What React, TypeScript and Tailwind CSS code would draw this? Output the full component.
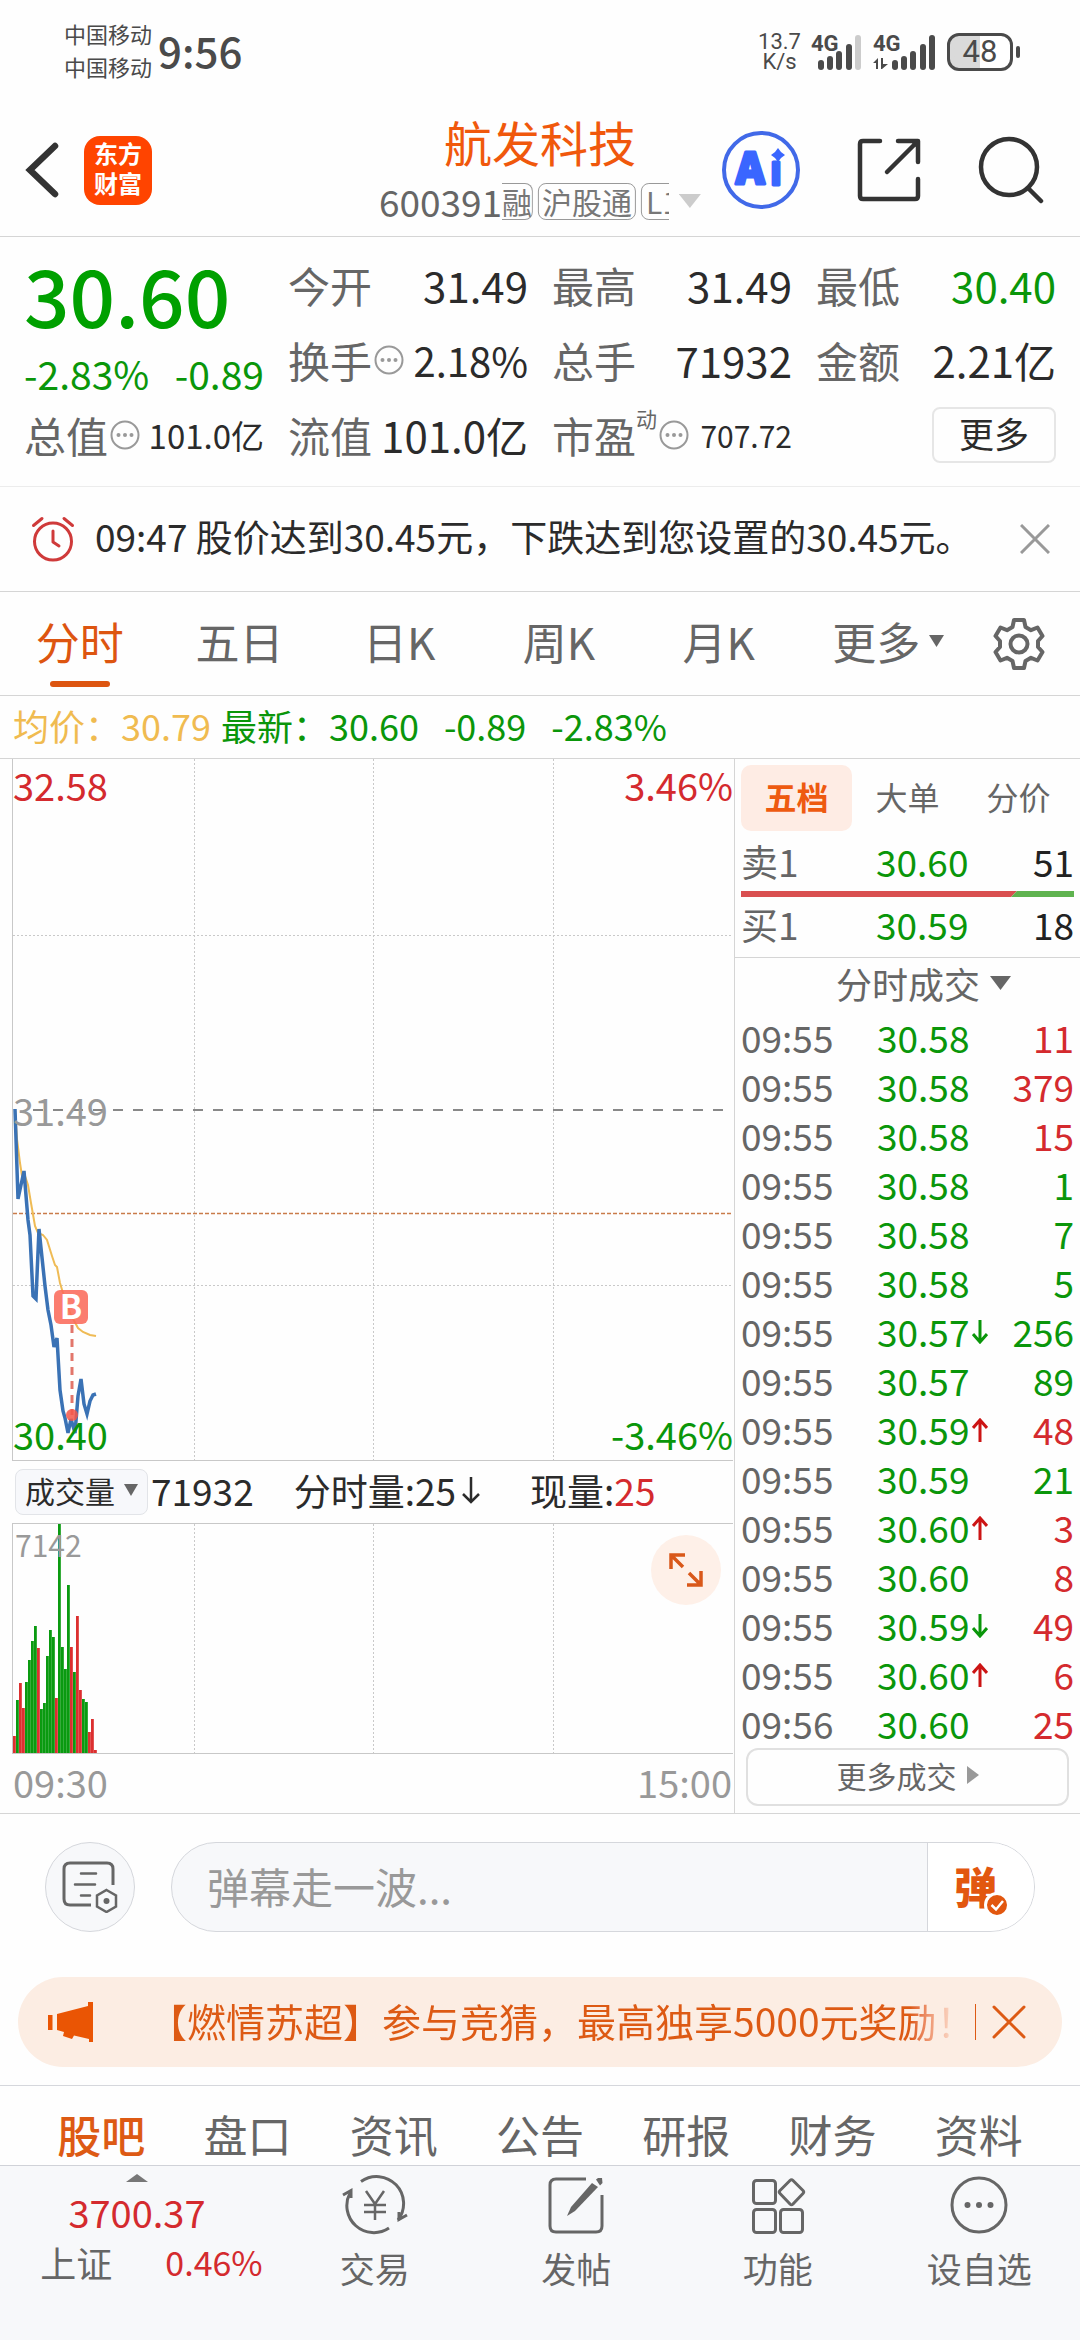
import React from "react";

const UP = "text-[#d42a2e]";
const DOWN = "text-[#0a960a]";

type Trade = { time: string; price: string; dir?: "up" | "down"; vol: string; side: "buy" | "sell" };

const trades: Trade[] = [
  { time: "09:55", price: "30.58", vol: "11", side: "buy" },
  { time: "09:55", price: "30.58", vol: "379", side: "buy" },
  { time: "09:55", price: "30.58", vol: "15", side: "buy" },
  { time: "09:55", price: "30.58", vol: "1", side: "sell" },
  { time: "09:55", price: "30.58", vol: "7", side: "sell" },
  { time: "09:55", price: "30.58", vol: "5", side: "sell" },
  { time: "09:55", price: "30.57", dir: "down", vol: "256", side: "sell" },
  { time: "09:55", price: "30.57", vol: "89", side: "sell" },
  { time: "09:55", price: "30.59", dir: "up", vol: "48", side: "buy" },
  { time: "09:55", price: "30.59", vol: "21", side: "sell" },
  { time: "09:55", price: "30.60", dir: "up", vol: "3", side: "buy" },
  { time: "09:55", price: "30.60", vol: "8", side: "buy" },
  { time: "09:55", price: "30.59", dir: "down", vol: "49", side: "buy" },
  { time: "09:55", price: "30.60", dir: "up", vol: "6", side: "buy" },
  { time: "09:56", price: "30.60", vol: "25", side: "buy" },
];

const volumes: [number, 0 | 1][] = [
  [17, 1], [53, 0], [70, 1], [45, 1], [71, 0], [93, 0], [112, 0], [127, 0], [105, 1], [44, 0],
  [50, 0], [97, 0], [123, 0], [116, 0], [55, 1], [229, 0], [106, 0], [84, 0], [168, 0], [106, 1],
  [81, 0], [137, 1], [63, 1], [54, 0], [51, 0], [21, 1], [34, 1], [3, 1],
];

function Caret({ className }: { className: string }) {
  return (
    <svg viewBox="0 0 20 14" className={className} fill="currentColor" preserveAspectRatio="none" aria-hidden="true">
      <path d="M0 0H20L10 14Z" />
    </svg>
  );
}

function Signal({ weak, data }: { weak?: boolean; data?: boolean }) {
  const bars = [
    [0, 25],
    [9, 21],
    [18, 16],
    [28, 9],
    [37, 0],
  ];
  return (
    <div className="relative h-[36px] w-[62px]">
      <span className="absolute left-0 top-0 font-['Roboto'] text-[22px] font-bold leading-[20px]">4G</span>
      <svg viewBox="0 0 62 36" className="absolute inset-0 h-full w-full" fill="#4a4a4a" aria-hidden="true">
        {bars.map(([x, y], i) => (
          <rect
            key={x}
            x={x + (data ? 19 : 7)}
            y={y + 1}
            width="6"
            height={35 - y}
            rx="3"
            fill={weak && i === 4 ? "#cccccc" : "#4a4a4a"}
          />
        ))}
        {data && <path d="M0 29 5 24V35H3V29ZM8 24H10V30H15L9 35H8Z" />}
      </svg>
    </div>
  );
}

function StatusBar() {
  return (
    <div className="flex h-[104px] items-center justify-between pl-16 pr-[60px] text-[#4a4a4a]">
      <div className="flex items-center gap-[6px] pb-1">
        <div className="text-[22px] leading-[33px]">
          <div>中国移动</div>
          <div>中国移动</div>
        </div>
        <div className="text-[42px] font-medium leading-[44px]">9:56</div>
      </div>
      <div className="flex items-center">
        <div className="mr-[10px] text-center font-['Roboto'] text-[22px] leading-[20px]">
          <div>13.7</div>
          <div>K/s</div>
        </div>
        <Signal weak />
        <Signal data />
        <div className="ml-3 flex items-center gap-[3px]">
          <div className="flex h-[38px] w-[66px] items-center justify-center rounded-xl border-[3px] border-[#4a4a4a] bg-linear-to-r from-[#dadada] from-50% to-white to-50% font-['Roboto'] text-[31px] leading-[32px]">
            48
          </div>
          <div className="h-3 w-1 rounded-sm bg-[#4a4a4a]" />
        </div>
      </div>
    </div>
  );
}

function Header() {
  return (
    <header className="relative flex h-[133px] items-center justify-between border-b border-[#d5d5d5] pl-6 pr-9">
      <div className="flex items-center gap-6">
        <button type="button" aria-label="返回">
          <svg viewBox="0 0 36 60" className="h-[60px] w-9" fill="none" stroke="#333" strokeWidth="6.5" strokeLinecap="round">
            <path d="M31 6 6 30 31 54" />
          </svg>
        </button>
        <div className="flex h-[69px] w-[68px] flex-col items-center justify-center rounded-2xl bg-[#ff4400] pb-1 text-[24px] font-bold leading-[30px] text-white">
          <span>东方</span>
          <span>财富</span>
        </div>
      </div>

      <div className="absolute left-1/2 top-[10px] flex -translate-x-1/2 flex-col items-center">
        <h1 className="text-[48px] leading-[54px] text-[#f0580c]">航发科技</h1>
        <button type="button" className="mt-[6px] flex items-center text-[#666]">
          <span className="text-[37px] leading-[54px]">600391</span>
          <span className="flex h-11 w-[167px] items-center gap-[5px] overflow-hidden text-[30px] leading-[35px] text-[#777]">
            <span className="shrink-0 rounded-r-lg border border-l-0 border-[#999]">融</span>
            <span className="shrink-0 rounded-lg border border-[#999] px-[3px]">沪股通</span>
            <span className="shrink-0 rounded-lg border border-[#999] px-1">L1</span>
          </span>
          <Caret className="ml-[10px] h-[14px] w-[22px] text-[#ccc]" />
        </button>
      </div>

      <div className="flex items-center">
        <button type="button" aria-label="Ai" className="mr-14">
          <svg viewBox="0 0 80 80" className="h-20 w-20">
            <circle cx="40" cy="40" r="37" fill="none" stroke="#4169e8" strokeWidth="4" />
            <g fill="#3a66ff" stroke="#3a66ff" strokeWidth="3" strokeLinejoin="round" fontFamily="'Noto Sans CJK SC', sans-serif" fontWeight="900" fontSize="43">
              <text x="15" y="54">A</text>
              <text x="49" y="55">ı</text>
              <path d="M57 18 60 22 64 25 60 28 57 32 54 28 50 25 54 22Z" stroke="none" />
            </g>
          </svg>
        </button>
        <button type="button" aria-label="分享" className="mr-[57px]">
          <svg viewBox="0 0 64 64" className="h-16 w-16" fill="none" stroke="#333" strokeWidth="4.5" strokeLinecap="round" strokeLinejoin="round">
            <path d="M23 3H6Q3 3 3 6V58Q3 61 6 61H58Q61 61 61 58V41" />
            <path d="M41 3H61V24M59 5 30 34" />
            <path d="M53 3H61V11Z" fill="#333" stroke="none" />
          </svg>
        </button>
        <button type="button" aria-label="搜索">
          <svg viewBox="0 0 66 68" className="h-[68px] w-[66px]" fill="none" stroke="#333" strokeWidth="4.5" strokeLinecap="round">
            <circle cx="31" cy="31" r="28" />
            <path d="M51 53 63 65" />
          </svg>
        </button>
      </div>
    </header>
  );
}

function Info() {
  return (
    <button type="button" aria-label="说明" className="ml-[2px] shrink-0">
      <svg viewBox="0 0 30 30" className="h-[30px] w-[30px]" fill="#999">
        <circle cx="15" cy="15" r="13.5" fill="none" stroke="#999" strokeWidth="2" />
        <circle cx="8.5" cy="15" r="2" />
        <circle cx="15" cy="15" r="2" />
        <circle cx="21.5" cy="15" r="2" />
      </svg>
    </button>
  );
}

function Quote({ label, sup, info, value, size = "text-[42px]", tone = "text-[#2b2b2b]" }: { label: string; sup?: string; info?: boolean; value: string; size?: string; tone?: string }) {
  return (
    <div className="flex h-[75px] items-center justify-between whitespace-nowrap">
      <span className="flex items-center text-[42px] leading-[60px] text-[#666]">
        {label}
        {sup && <span className="self-start text-[21px] leading-[26px]">{sup}</span>}
        {info && <Info />}
      </span>
      <span className={`${size} leading-[60px] ${tone}`}>{value}</span>
    </div>
  );
}

function Quotes() {
  return (
    <section className="grid grid-cols-4 gap-x-6 border-b border-[#ececec] px-6 pb-[14px] pt-[10px]">
      <div className={`row-span-2 h-[150px] ${DOWN}`}>
        <div className="text-[80px] font-medium leading-[92px] text-[#00a000]">30.60</div>
        <div className="mt-1 flex justify-between whitespace-nowrap text-[39px] leading-[60px]">
          <span>-2.83%</span>
          <span>-0.89</span>
        </div>
      </div>
      <Quote label="今开" value="31.49" />
      <Quote label="最高" value="31.49" />
      <Quote label="最低" value="30.40" tone={DOWN} />
      <Quote label="换手" info value="2.18%" size="text-[40px]" />
      <Quote label="总手" value="71932" />
      <Quote label="金额" value="2.21亿" />
      <Quote label="总值" info value="101.0亿" size="text-[33px]" />
      <Quote label="流值" value="101.0亿" />
      <Quote label="市盈" sup="动" info value="707.72" size="text-[30px]" />
      <div className="flex h-[75px] items-center justify-end">
        <button type="button" className="h-14 rounded-lg border-2 border-[#e6e6e6] px-[25px] pb-1 text-[35px] leading-[48px] text-[#2b2b2b]">
          更多
        </button>
      </div>
    </section>
  );
}

function Alert() {
  return (
    <div className="flex h-[105px] items-center border-b border-[#d5d5d5] pl-[31px] pr-[30px] text-[#2b2b2b]">
      <svg viewBox="0 0 44 46" className="h-[46px] w-11" fill="none" stroke="#cf3a3a" strokeWidth="3" strokeLinecap="round" strokeLinejoin="round" aria-hidden="true">
        <circle cx="22" cy="25.5" r="18.5" />
        <path d="M22 15V26L28 30M2.500 9.500 11 2.500M41.500 9.500 33 2.500" />
      </svg>
      <p className="ml-5 flex-1 whitespace-nowrap pb-[6px] text-[37px] leading-[54px]">09:47 股价达到30.45元，下跌达到您设置的30.45元。</p>
      <button type="button" aria-label="关闭">
        <svg viewBox="0 0 30 30" className="h-[30px] w-[30px]" stroke="#999" strokeWidth="3">
          <path d="M1 1 29 29M29 1 1 29" />
        </svg>
      </button>
    </div>
  );
}

function PeriodTabs() {
  return (
    <nav className="flex h-[104px] items-stretch border-b border-[#d5d5d5] pr-5 text-[44px] leading-[64px] text-[#666]">
      <button type="button" className="relative flex-[160] pb-[6px] text-[#dd5510]">
        分时
        <span className="absolute bottom-2 left-1/2 h-[6px] w-[60px] -translate-x-1/2 rounded-full bg-[#dd5510]" />
      </button>
      <button type="button" className="flex-[160] pb-[6px]">五日</button>
      <button type="button" className="flex-[160] pb-[6px]">日K</button>
      <button type="button" className="flex-[160] pb-[6px]">周K</button>
      <button type="button" className="flex-[160] pb-[6px]">月K</button>
      <button type="button" className="flex flex-[180] items-center justify-center gap-[9px] pb-[6px]">
        更多
        <Caret className="h-3 w-[15px]" />
      </button>
      <button type="button" aria-label="设置" className="flex flex-[82] items-center justify-center">
        <svg viewBox="0 0 52 54" className="h-[54px] w-[52px]" fill="none" stroke="#666" strokeWidth="4" strokeLinejoin="round">
          <path d="M21 3H31L32.500 10 38 13.200 44.500 10.500 49.500 19 45 24V30L49.500 35 44.500 43.500 38 40.800 32.500 44 31 51H21L19.500 44 14 40.800 7.500 43.500 2.500 35 7 30V24L2.500 19 7.500 10.500 14 13.200 19.500 10Z" />
          <circle cx="26" cy="27" r="8.500" />
        </svg>
      </button>
    </nav>
  );
}

function PriceLine() {
  return (
    <div className={`flex h-[63px] items-center whitespace-nowrap border-b border-[#d5d5d5] pb-[5px] pl-[13px] text-[36px] leading-[56px] ${DOWN}`}>
      <span className="mr-[10px] text-[#f0bb50]">均价：30.79</span>
      <span className="mr-[25px]">最新：30.60</span>
      <span className="mr-[25px]">-0.89</span>
      <span>-2.83%</span>
    </div>
  );
}

function PriceChart() {
  return (
    <div className="relative ml-3 mr-px border-b border-l border-[#c8c8c8] text-[38px] leading-[52px]">
      <svg viewBox="0 0 720 701" className="block h-[701px] w-full" preserveAspectRatio="none" fill="none" aria-hidden="true">
        <g stroke="#c9c9c9" strokeDasharray="2 2">
          <path d="M181.500 0V701M360.500 0V701M540.500 0V701M0 176.500H720M0 526.500H720" />
        </g>
        <path d="M20 351H720" stroke="#888" strokeWidth="2" strokeDasharray="10 10" />
        <path d="M0 454.500H720" stroke="#c97b4a" strokeWidth="1.500" strokeDasharray="4 2" />
        <path
          d="M2 351 4 380 7 404 9 417 12 417 15 426 18 444 22 467 25 474 30 476 34 481 39 497 42 506 44 508 47 524 50 534 53 541 57 554 65 569 70 573 77 576 83 577"
          stroke="#efbb55"
          strokeWidth="2"
        />
        <path
          d="M2 350 5 440 11 412 15 461 17 476 20 537 23 540 26 470 32 527 35 551 38 566 41 588 44 579 47 631 50 652 52 659 55 674 58 660 62 674 65 637 68 620 71 645 74 655 77 642 80 636 83 635"
          stroke="#3a72b5"
          strokeWidth="3.500"
        />
        <path d="M59 566V656" stroke="#e2766b" strokeWidth="3" strokeDasharray="8 6" />
        <circle cx="59" cy="656" r="6" fill="#f4564a" fillOpacity="0.85" />
        <rect x="41" y="531" width="34" height="34" rx="6" fill="#fa6b5b" fillOpacity="0.88" />
        <text x="58" y="560" fill="#fff" fontSize="33" fontWeight="700" textAnchor="middle" fontFamily="'Noto Sans CJK SC', sans-serif">
          B
        </text>
      </svg>
      <span className={`absolute left-0 top-0 ${UP}`}>32.58</span>
      <span className={`absolute right-0 top-0 ${UP}`}>3.46%</span>
      <span className="absolute left-0 top-1/2 -translate-y-1/2 text-[#999]">31.49</span>
      <span className={`absolute bottom-0 left-0 ${DOWN}`}>30.40</span>
      <span className={`absolute bottom-0 right-0 ${DOWN}`}>-3.46%</span>
    </div>
  );
}

function VolumeChart() {
  return (
    <>
      <div className="flex h-[62px] items-center whitespace-nowrap pl-[15px] text-[37px] leading-[54px] text-[#2b2b2b]">
        <button type="button" className="flex h-[46px] items-center gap-[9px] rounded-lg border border-[#e2e4e8] bg-[#f7f8fb] px-[9px] pb-1 text-[30px] leading-[40px]">
          成交量
          <Caret className="h-3 w-[14px] text-[#666]" />
        </button>
        <span className="ml-[3px] mr-10 pb-[5px]">71932</span>
        <span className="flex items-center pb-[5px]">
          分时量:25
          <svg viewBox="0 0 22 28" className="ml-1 h-7 w-[22px]" fill="none" stroke="#2b2b2b" strokeWidth="2.500" aria-hidden="true">
            <path d="M11 1V26M3 18 11 26 19 18" />
          </svg>
        </span>
        <span className="ml-12 pb-[5px]">
          现量:<span className={UP}>25</span>
        </span>
      </div>
      <div className="relative ml-3 mr-px border-y border-l border-[#c8c8c8]">
        <svg viewBox="0 0 720 229" className="block h-[229px] w-full" preserveAspectRatio="none" aria-hidden="true">
          <path d="M181.500 0V229M360.500 0V229M540.500 0V229" stroke="#c9c9c9" strokeDasharray="2 2" />
          {volumes.map(([h, up], i) => (
            <g key={i} fill={up ? "#dc2f2f" : "#0a9a10"}>
              <rect x={i * 3} y={229 - h} width="3" height={h} />
              <rect x={i * 3 + 2} y={229 - h} width="1" height={h} fill="#fff" fillOpacity="0.18" />
            </g>
          ))}
        </svg>
        <span className="absolute left-[2px] top-0 text-[30px] leading-[40px] text-[#999]">7142</span>
        <button type="button" aria-label="全屏" className="absolute right-3 top-[11px] flex h-[70px] w-[70px] items-center justify-center rounded-full bg-[#fef0e8]">
          <svg viewBox="0 0 34 34" className="h-[34px] w-[34px]" fill="none" stroke="#d9581a" strokeWidth="3.5">
            <path d="M16 2H2V16M2 2 14 14M32 18V32H18M32 32 20 20" />
          </svg>
        </button>
      </div>
      <div className="flex h-[59px] justify-between pl-[13px] pr-[2px] text-[38px] leading-[56px] text-[#999]">
        <span>09:30</span>
        <span>15:00</span>
      </div>
    </>
  );
}

function Arrow({ dir }: { dir: "up" | "down" }) {
  return (
    <svg viewBox="0 0 16 24" className={dir === "up" ? "h-6 w-4 text-[#cc1414]" : "h-6 w-4 rotate-180 text-[#0a960a]"} fill="none" stroke="currentColor" strokeWidth="3" aria-hidden="true">
      <path d="M8 24V2M1 10 8 2 15 10" />
    </svg>
  );
}

function OrderBook() {
  return (
    <aside className="flex w-[346px] shrink-0 flex-col border-l border-[#d5d5d5] text-[37px]">
      <div className="grid grid-cols-3 px-[6px] pt-[6px] text-[32px] leading-[48px] text-[#666]">
        <button type="button" className="h-[66px] rounded-[10px] bg-[#feece4] pb-[5px] font-bold text-[#ee5a10]">五档</button>
        <button type="button" className="pb-[5px]">大单</button>
        <button type="button" className="pb-[5px]">分价</button>
      </div>
      <div className="px-[6px]">
        <div className="grid h-[60px] grid-cols-[135px_1fr_auto] items-center leading-[54px]">
          <span className="text-[#666]">卖1</span>
          <span className={DOWN}>30.60</span>
          <span className="text-[#222]">51</span>
        </div>
        <svg viewBox="0 0 333 6" className="block h-[6px] w-full" preserveAspectRatio="none" aria-hidden="true">
          <path d="M0 0H276L270 6H0Z" fill="#d94f50" />
          <path d="M276 0H333V6H270Z" fill="#5fb34f" />
        </svg>
        <div className="grid h-[60px] grid-cols-[135px_1fr_auto] items-center pb-[6px] leading-[54px]">
          <span className="text-[#666]">买1</span>
          <span className={DOWN}>30.59</span>
          <span className="text-[#222]">18</span>
        </div>
      </div>
      <button type="button" className="flex h-[56px] items-center justify-center gap-[10px] border-t border-[#d5d5d5] pb-[5px] pl-8 text-[36px] leading-[50px] text-[#666]">
        分时成交
        <Caret className="h-[14px] w-[21px]" />
      </button>
      <table className="w-full table-fixed leading-[49px]">
        <colgroup>
          <col className="w-[142px]" />
          <col className="w-[114px]" />
          <col />
        </colgroup>
        <tbody>
          {trades.map((t, i) => (
            <tr key={i} className="h-[49px]">
              <td className="p-0 pl-[6px] text-[#666]">{t.time}</td>
              <td className={`p-0 ${DOWN}`}>
                <span className="flex items-center gap-[3px]">
                  {t.price}
                  {t.dir && <Arrow dir={t.dir} />}
                </span>
              </td>
              <td className={t.side === "buy" ? "p-0 pr-[6px] text-right text-[#d42a2e]" : "p-0 pr-[6px] text-right text-[#0a960a]"}>{t.vol}</td>
            </tr>
          ))}
        </tbody>
      </table>
      <button type="button" className="mx-[11px] flex h-[58px] items-center justify-center gap-[10px] rounded-xl border-2 border-[#e0e0e0] pb-1 text-[30px] leading-[48px] text-[#666]">
        更多成交
        <svg viewBox="0 0 12 18" className="h-[18px] w-3" fill="#999" aria-hidden="true">
          <path d="M0 0 12 9 0 18Z" />
        </svg>
      </button>
    </aside>
  );
}

function Danmaku() {
  return (
    <form className="flex items-center px-[45px] pt-7" onSubmit={(e) => e.preventDefault()}>
      <button type="button" aria-label="弹幕设置" className="flex h-[90px] w-[90px] items-center justify-center rounded-full border border-[#d5d7dc] bg-[#f7f8fa]">
        <svg viewBox="0 0 56 52" className="h-[52px] w-14" fill="none" stroke="#666" strokeWidth="3">
          <path d="M51 24V8Q51 2 45 2H8Q2 2 2 8V38Q2 44 8 44H29" />
          <path d="M19 12.500H34M13 23.500H33M19 34.500H28" strokeLinecap="round" strokeWidth="2.500" />
          <path d="M44.500 29 54 34.500V45.500L44.500 51 35 45.500V34.500Z" strokeWidth="2.500" />
          <circle cx="44.500" cy="40" r="3" fill="#666" stroke="none" />
        </svg>
      </button>
      <div className="ml-9 flex h-[90px] flex-1 overflow-hidden rounded-full border border-[#d5d7dc] bg-[#f7f8fa]">
        <input
          type="text"
          aria-label="弹幕"
          placeholder="弹幕走一波..."
          className="min-w-0 flex-1 bg-transparent pb-[3px] pl-[35px] text-[42px] leading-[60px] outline-none placeholder:text-[#999]"
        />
        <button type="button" aria-label="弹幕开关" className="flex w-[107px] items-center border-l border-[#d5d7dc] bg-white pb-[5px] pl-[26px]">
          <span className="relative text-[43px] font-black leading-[60px] text-[#e2570f]">
            弹
            <svg viewBox="0 0 26 26" className="absolute -bottom-[3px] left-[30px] h-[26px] w-[26px]" aria-hidden="true">
              <circle cx="13" cy="13" r="11.500" fill="#e2570f" stroke="#fff" strokeWidth="3" />
              <path d="M7.500 13 12 17.500 19 9" fill="none" stroke="#fff" strokeWidth="2.500" />
            </svg>
          </span>
        </button>
      </div>
    </form>
  );
}

function Banner() {
  return (
    <div className="mx-[18px] mb-[18px] mt-[45px] flex h-[90px] items-center rounded-full bg-[#fcede3] pl-[30px] pr-9 text-[#dd5a14]">
      <svg viewBox="0 0 46 40" className="h-10 w-[46px]" fill="#ea5504" aria-hidden="true">
        <path d="M0 13H4.500V28H0ZM9 12 40 4V0H45V40H41V37L26 33.500 24 37 15 34 16 30 9 28Z" />
      </svg>
      <p className="ml-[54px] flex-1 overflow-hidden whitespace-nowrap bg-linear-to-r from-[#dd5a14] from-94% to-[#fcede3] bg-clip-text pb-[5px] text-[39px] leading-[58px] text-transparent">
        【燃情苏超】参与竞猜，最高独享5000元奖励！
      </p>
      <span className="ml-4 mr-4 h-9 w-px bg-[#dd5a14]" />
      <button type="button" aria-label="关闭公告">
        <svg viewBox="0 0 34 34" className="h-[34px] w-[34px]" stroke="#dd5a14" strokeWidth="3" strokeLinecap="round">
          <path d="M2 2 32 32M32 2 2 32" />
        </svg>
      </button>
    </div>
  );
}

function SectionTabs() {
  return (
    <nav className="grid h-[80px] grid-cols-7 border-t border-[#d5d7dc] px-7 pt-[17px] text-center text-[44px] leading-[62px] text-[#666]">
      <button type="button" className="font-medium text-[#dd5a14]">股吧</button>
      <button type="button">盘口</button>
      <button type="button">资讯</button>
      <button type="button">公告</button>
      <button type="button">研报</button>
      <button type="button">财务</button>
      <button type="button">资料</button>
    </nav>
  );
}

function NavItem({ label, children }: { label: string; children: React.ReactNode }) {
  return (
    <button type="button" className="flex flex-1 flex-col items-center pt-[9px] text-[35px] leading-[56px] text-[#666]">
      <svg viewBox="0 0 66 60" className="mb-[5px] h-[60px] w-[66px]" fill="none" stroke="#666" strokeWidth="3" aria-hidden="true">
        {children}
      </svg>
      {label}
    </button>
  );
}

function BottomBar() {
  return (
    <footer className="flex min-h-[170px] flex-1 border-t border-[#d0d2d8] bg-[#f7f8fa]">
      <button type="button" className={`flex w-[274px] flex-col items-center pt-2 ${UP}`}>
        <svg viewBox="0 0 22 8" className="h-2 w-[22px]" fill="#777" aria-hidden="true">
          <path d="M0 8 11 0 22 8Z" />
        </svg>
        <span className="text-[38px] leading-[60px]">3700.37</span>
        <span className="flex gap-[53px] pl-[29px] leading-[40px]">
          <span className="text-[36px] text-[#666]">上证</span>
          <span className="text-[34px]">0.46%</span>
        </span>
      </button>
      <NavItem label="交易">
        <path d="M19 6.500A27 27 0 0 1 56 45M47 53A27 27 0 0 1 8 18" strokeWidth="3" />
        <path d="M1 20 9 15.500V23M65 40 57 44.500V37" strokeWidth="3" />
        <path d="M24 16 33 29 42 16M22 30H44M22 37H44M33 29V45" strokeWidth="2.500" />
      </NavItem>
      <NavItem label="发帖">
        <path d="M43 4H13Q7 4 7 10V51Q7 57 13 57H53Q59 57 59 51V20" />
        <path d="M49 8 55 12 32 36 24 41 28 32Z" fill="#666" stroke="none" />
        <path d="M53 4.500 55 3 59 3 59.500 8 57 10.500Z" fill="#666" stroke="none" />
      </NavItem>
      <NavItem label="功能">
        <rect x="8.500" y="5.500" width="22" height="23" rx="3" />
        <rect x="8.500" y="34.500" width="22" height="23" rx="3" />
        <rect x="35.500" y="34.500" width="22" height="23" rx="3" />
        <path d="M45 5.500Q46.500 4 48 5.500L58 15.500Q59.500 17 58 18.500L48 29Q46.500 30.500 45 29L35 18.500Q33.500 17 35 15.500Z" />
      </NavItem>
      <NavItem label="设自选">
        <circle cx="33" cy="30" r="27" />
        <g fill="#666" stroke="none">
          <circle cx="21.500" cy="30" r="3" />
          <circle cx="33" cy="30" r="3" />
          <circle cx="44.500" cy="30" r="3" />
        </g>
      </NavItem>
    </footer>
  );
}

export default function App() {
  return (
    <div className="flex min-h-screen w-full flex-col bg-[#fefefe] font-['Noto_Sans_CJK_SC',sans-serif]">
      <StatusBar />
      <Header />
      <Quotes />
      <Alert />
      <PeriodTabs />
      <PriceLine />
      <main className="flex border-b border-[#d5d5d5]">
        <section className="min-w-0 flex-1">
          <PriceChart />
          <VolumeChart />
        </section>
        <OrderBook />
      </main>
      <Danmaku />
      <Banner />
      <SectionTabs />
      <BottomBar />
    </div>
  );
}
